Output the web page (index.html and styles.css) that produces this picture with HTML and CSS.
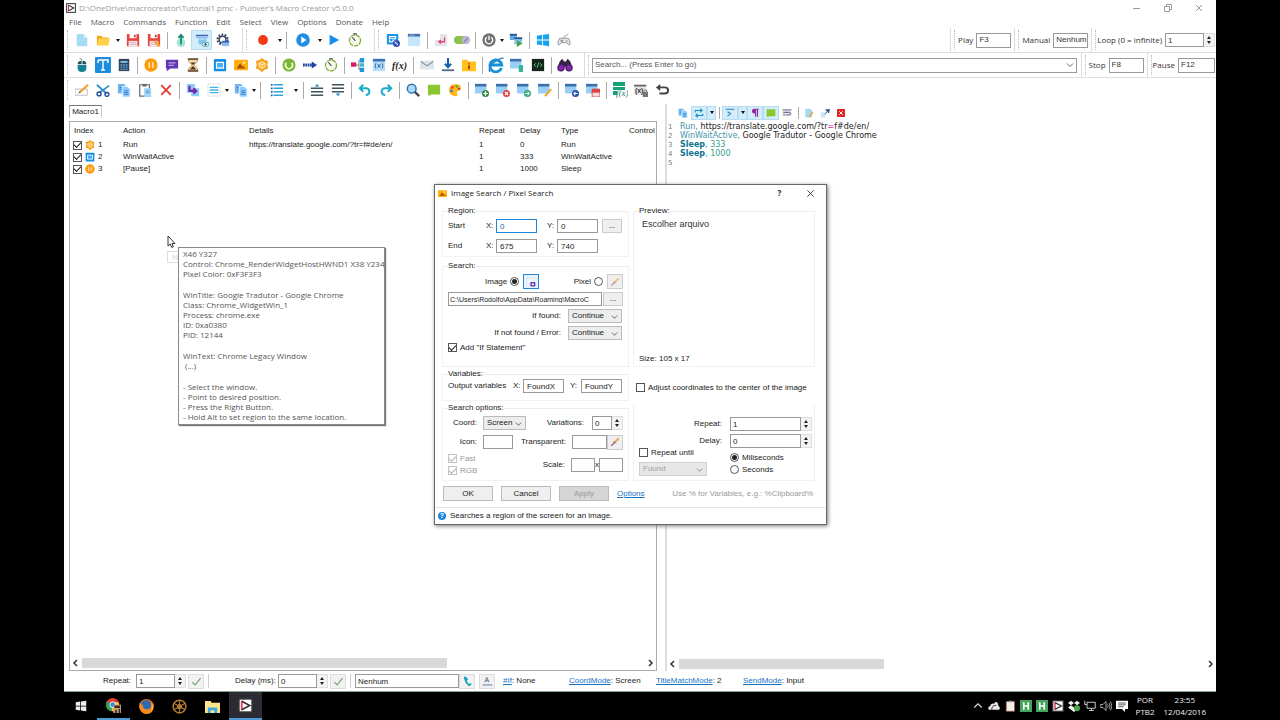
FILE: index.html
```html
<!DOCTYPE html>
<html lang="en">
<head>
<meta charset="utf-8">
<title>Pulover's Macro Creator</title>
<link rel="stylesheet" href="styles.css">
</head>
<body>
<svg class="sprite" aria-hidden="true">
  <symbol id="app" viewBox="0 0 16 16"><rect x="1" y="1" width="14" height="14" fill="#fff" stroke="#333" stroke-width="1.6"/><path d="M4 3v10" stroke="#e0416a" stroke-width="2"/><path d="M4 3.500L12.500 8L4 12.500" fill="none" stroke="#333" stroke-width="1.700"/></symbol>
  <symbol id="new" viewBox="0 0 16 16"><path d="M2 1h8l4 4v10H2z" fill="#a5dbf7"/><path d="M10 1v4h4z" fill="#e3f5ff"/></symbol>
  <symbol id="open" viewBox="0 0 16 16"><path d="M1 3h5l1.500 2H14v9H1z" fill="#f2a81d"/><path d="M3 6h13l-2 8H1z" fill="#ffd04a"/></symbol>
  <symbol id="save" viewBox="0 0 16 16"><path d="M1 1h13l1 1v13H1z" fill="#e8453c"/><path d="M4 1h8v5H4z" fill="#fff"/><path d="M9 2h2v3H9z" fill="#b43"/><path d="M3 9h10v6H3z" fill="#f6eeee"/><path d="M4 11h8M4 13h8" stroke="#c9a" stroke-width=".8"/></symbol>
  <symbol id="saveas" viewBox="0 0 16 16"><use href="#save"/><path d="M9 9l5 6" stroke="#f5a52b" stroke-width="3"/></symbol>
  <symbol id="up" viewBox="0 0 16 16"><ellipse cx="8" cy="11" rx="5" ry="5" fill="#a9e4d3"/><path d="M8 13V3M5 5.500L8 2l3 3.500" fill="none" stroke="#138a72" stroke-width="2"/></symbol>
  <symbol id="preview" viewBox="0 0 16 16"><path d="M1 2h14v3H1z" fill="#3565b5"/><path d="M4 5h9v8H4z" fill="#86c5f1"/><path d="M1 4h14M5 7h6" stroke="#fff" stroke-width=".7"/><ellipse cx="12" cy="13" rx="4" ry="2.500" fill="#e9f7f9" stroke="#48a6a0"/><circle cx="12" cy="13" r="1.300" fill="#236"/></symbol>
  <symbol id="gear" viewBox="0 0 16 16"><circle cx="7.500" cy="7.500" r="5.600" fill="none" stroke="#3b4a66" stroke-width="2.600" stroke-dasharray="2 1.500"/><circle cx="7.500" cy="7.500" r="3.800" fill="#fff" stroke="#3b4a66" stroke-width="1.600"/><path d="M7 9h8v6H7z" fill="#8cbcf0"/><path d="M7 9h8v2H7z" fill="#3565b5"/></symbol>
  <symbol id="rec" viewBox="0 0 16 16"><circle cx="8" cy="8" r="5.600" fill="#f03a12"/></symbol>
  <symbol id="playc" viewBox="0 0 16 16"><circle cx="8" cy="8" r="7.800" fill="#1e8fe8"/><path d="M6 4l6 4-6 4z" fill="#fff"/></symbol>
  <symbol id="play" viewBox="0 0 16 16"><path d="M3 2l11 6-11 6z" fill="#1e8fe8"/></symbol>
  <symbol id="timer" viewBox="0 0 16 16"><circle cx="8" cy="8.500" r="6.300" fill="#f8fbee" stroke="#7cab3a" stroke-width="1.500" stroke-dasharray="5 1"/><path d="M5 5l3.500 4M6 1h4" stroke="#444" stroke-width="1.200"/></symbol>
  <symbol id="winopt" viewBox="0 0 16 16"><rect x="1" y="1" width="13" height="12" rx="1" fill="#1b93e6"/><path d="M4 4h7v2H4zM4 7v3h4V8h3" fill="none" stroke="#fff" stroke-width="1.300"/><circle cx="12" cy="12" r="4" fill="#3b51b5"/><path d="M10 10l3.500 3.500" stroke="#fff" stroke-width="1.200"/></symbol>
  <symbol id="winblank" viewBox="0 0 16 16"><path d="M1 1h14v14H1z" fill="#c5e7fb"/><path d="M1 1h14v3H1z" fill="#466cae"/><path d="M3 2.500h1M5 2.500h1M7 2.500h1" stroke="#fff"/></symbol>
  <symbol id="enter" viewBox="0 0 16 16"><path d="M1 8h6V1h8v14H1z" fill="#e6e4e8"/><path d="M12 5v5H6M8 8l-2.500 2L8 12" fill="none" stroke="#e0457b" stroke-width="1.500"/></symbol>
  <symbol id="toggle" viewBox="0 0 16 16"><rect x="0" y="4" width="15" height="8" rx="4" fill="#8bc34a"/><circle cx="12" cy="8" r="4" fill="#b9b7d8"/><path d="M10 10l4-4" stroke="#6962a8"/></symbol>
  <symbol id="power" viewBox="0 0 16 16"><circle cx="8" cy="8" r="7.600" fill="#717171"/><path d="M5.500 4.800a4.200 4.200 0 1 0 5 0M8 3v5" fill="none" stroke="#fff" stroke-width="1.500"/></symbol>
  <symbol id="multi" viewBox="0 0 16 16"><path d="M1 1h8v7H1z" fill="#62a8e2"/><path d="M1 1h8v2H1z" fill="#285293"/><path d="M6 5h9v8H6z" fill="#8bc4ef"/><path d="M6 5h9v2H6z" fill="#285293"/><path d="M9 8l6 4-6 4z" fill="#43a343"/></symbol>
  <symbol id="winlogo" viewBox="0 0 16 16"><path d="M1 3l6-1v5.500H1zM8 2l7-1v6.500H8zM1 8.500h6V14l-6-1zM8 8.500h7V15l-7-1z" fill="currentColor"/></symbol>
  <symbol id="pad" viewBox="0 0 16 16"><path d="M8 6V4q3-1 5-3" fill="none" stroke="#999"/><path d="M3 6h10q2 2 2 7-1 2-4-2H5q-3 4-4 2 0-5 2-7z" fill="#e6e6e6" stroke="#8d8d8d"/><path d="M4 9h3M5.500 7.500v3M10 9h2" stroke="#777"/></symbol>
  <symbol id="mouse" viewBox="0 0 16 16"><path d="M3 8h10v3q0 5-5 5t-5-5z" fill="#138292"/><path d="M3 7q0-4 4.500-4v4zM8.500 3Q13 3 13 7H8.500z" fill="#284c5c"/><path d="M8 3q0-2-3-3" fill="none" stroke="#3c9d5c"/></symbol>
  <symbol id="text" viewBox="0 0 16 16"><rect width="16" height="16" rx="1" fill="#1d8ede"/><path d="M3 3h10v3M8 3v10M6 13h4M3 6V3" fill="none" stroke="#fff" stroke-width="1.400"/></symbol>
  <symbol id="calc" viewBox="0 0 16 16"><rect x="2" y="1" width="12" height="14" fill="#33455b"/><path d="M4 4.500h8" stroke="#7ecbff" stroke-width="2"/><path d="M4 8h8M4 10.500h8M4 13h8" stroke="#5ba4dd" stroke-width="1.500" stroke-dasharray="2 1"/></symbol>
  <symbol id="pause" viewBox="0 0 16 16"><circle cx="8" cy="8" r="7.600" fill="#ff9a0a"/><path d="M6 4.500v7M10 4.500v7" stroke="#ffe5ae" stroke-width="1.800"/></symbol>
  <symbol id="msg" viewBox="0 0 16 16"><path d="M1 2h14v10H6l-4 3v-3H1z" fill="#6336b1"/><path d="M4 5.500h8M4 8.500h6" stroke="#b9a2e2" stroke-width="1.300"/></symbol>
  <symbol id="hour" viewBox="0 0 16 16"><path d="M3 2h10v2L9 8l4 4v2H3v-2l4-4-4-4z" fill="#f6dfb6" stroke="#c98d3a"/><path d="M5 5h6L8 8zM8 9l4 4H4z" fill="#53321f"/><path d="M2 1.200h12M2 14.800h12" stroke="#543" stroke-width="1.700"/></symbol>
  <symbol id="bwin" viewBox="0 0 16 16"><rect x="1" y="1" width="14" height="14" rx="1" fill="#168ee4"/><path d="M4 5h8v6.500H4z" fill="#46b2fa" stroke="#fff" stroke-width="1.300"/></symbol>
  <symbol id="image" viewBox="0 0 16 16"><rect x="0" y="2" width="16" height="12" rx="1" fill="#ffae10"/><path d="M3 12l4-6 3 4 1-1 2 3z" fill="#a84e00"/><circle cx="11.500" cy="5.500" r="1.400" fill="#fff0b8"/></symbol>
  <symbol id="cube" viewBox="0 0 16 16"><path d="M8 0l3 2.300 4 1-1 4.200 1 4.500-4 1.500L8 16l-3-2.500L1 12l1-4.500-1-4.200 4-1z" fill="#f6a01a"/><path d="M8 4l3.500 2v4L8 12l-3.500-2V6z" fill="#ffb944" stroke="#fff0cd"/><path d="M8 8v4M8 8l3.500-2M8 8L4.500 6" stroke="#fff0cd" stroke-width=".8"/></symbol>
  <symbol id="loop" viewBox="0 0 16 16"><circle cx="8" cy="8" r="7.500" fill="#7cb43b"/><path d="M5 5.500a4 4 0 1 0 6 0" fill="none" stroke="#e4ffb9" stroke-width="2"/></symbol>
  <symbol id="goto" viewBox="0 0 16 16"><path d="M0 8h10" stroke="#1a43a2" stroke-width="3.500" stroke-dasharray="2 .7"/><path d="M10 4l6 4-6 4z" fill="#1a43a2"/></symbol>
  <symbol id="flow" viewBox="0 0 16 16"><path d="M5 8h4M9 3v10M9 3h3M9 13h3" stroke="#777" fill="none"/><path d="M0 5h6v5H0z" fill="#d81b60"/><path d="M10 0h5v5h-5zM10 11h5v5h-5z" fill="#2196d8"/><path d="M10 6h5v4h-5z" fill="#40b8c8"/></symbol>
  <symbol id="var" viewBox="0 0 16 16"><path d="M1 1h14v14H1z" fill="#b7dcfa"/><path d="M1 1h14v3H1z" fill="#3b72b6"/><path d="M4.500 6q-2 3 0 6M11.500 6q2 3 0 6M6.500 7l3 4M9.500 7l-3 4" fill="none" stroke="#2868a8" stroke-width="1.100"/></symbol>
  <symbol id="mail" viewBox="0 0 16 16"><path d="M0 3h16v10H0z" fill="#dce5ec"/><path d="M1 4l7 5 7-5" fill="none" stroke="#82929d" stroke-width="1.300"/></symbol>
  <symbol id="dl" viewBox="0 0 16 16"><path d="M8 0v9M4.500 6.500L8 10.500l3.500-4" fill="none" stroke="#1b5fb0" stroke-width="2.400"/><path d="M1 14h14" stroke="#4a6687" stroke-width="2"/></symbol>
  <symbol id="zip" viewBox="0 0 16 16"><path d="M0 2h6l1 2h9v11H0z" fill="#ffc21a"/><path d="M8 5v8" stroke="#d64a20" stroke-width="2" stroke-dasharray="1.500 .7"/><path d="M7 9h2v3H7z" fill="#9c351d"/></symbol>
  <symbol id="ie" viewBox="0 0 16 16"><path d="M13.500 11a6 6 0 1 1 .3-3H3" fill="none" stroke="#1593d6" stroke-width="2.800"/><path d="M2 15Q-1 10 8 4q6-4 7.500-2.500" fill="none" stroke="#2a7cc7" stroke-width="1.300"/></symbol>
  <symbol id="dev" viewBox="0 0 16 16"><use href="#w"/><rect x="10" y="8" width="5" height="8" rx="1" fill="#37b59a"/></symbol>
  <symbol id="term" viewBox="0 0 16 16"><path d="M1 1h14v14H1z" fill="#15251c"/><path d="M5.500 6l-2 2 2 2M10.500 6l2 2-2 2M9 5l-2 6" fill="none" stroke="#66d77f"/></symbol>
  <symbol id="bino" viewBox="0 0 18 16"><path d="M3 4l3-3 2 3h2l2-3 3 3 2 6H1z" fill="#352443"/><circle cx="4.500" cy="11" r="4.200" fill="#4a256d"/><circle cx="13.500" cy="11" r="4.200" fill="#4a256d"/><circle cx="4.500" cy="11" r="2.600" fill="#8d22b5"/><circle cx="13.500" cy="11" r="2.600" fill="#8d22b5"/></symbol>
  <symbol id="edit" viewBox="0 0 16 16"><path d="M0 7h14v7H0z" fill="#fff" stroke="#b1b8c6"/><path d="M5 11l10-9" stroke="#f5a52b" stroke-width="2.600"/><path d="M4 12l2-2" stroke="#444"/></symbol>
  <symbol id="cut" viewBox="0 0 16 16"><path d="M1 2l11 10M15 3L4 11" stroke="#2b8fd0" stroke-width="2"/><circle cx="3.500" cy="12.500" r="2.200" fill="none" stroke="#24509e" stroke-width="1.700"/><circle cx="12.500" cy="13" r="2.200" fill="none" stroke="#24509e" stroke-width="1.700"/></symbol>
  <symbol id="copy" viewBox="0 0 16 16"><path d="M1 1h7l2 2v9H1z" fill="#72b5ee"/><path d="M6 4h6l3 3v9H6z" fill="#8bcbff" stroke="#fff" stroke-width=".8"/><path d="M8 9h5M8 11h5M8 13h5M3 5h2M3 7h2" stroke="#3878ba"/></symbol>
  <symbol id="paste" viewBox="0 0 16 16"><path d="M2 2h11v13H2z" fill="#fff" stroke="#626d75" stroke-width="1.400"/><path d="M5 1h5v3H5z" fill="#626d75"/><path d="M7 6h8v10H7z" fill="#9ed3fa"/><path d="M9 9h4M9 11h4" stroke="#5592bd"/></symbol>
  <symbol id="del" viewBox="0 0 16 16"><path d="M2.500 2.500l11 11M13.500 2.500l-11 11" stroke="#e5382f" stroke-width="2"/></symbol>
  <symbol id="insert" viewBox="0 0 16 16"><path d="M1 1h9v10H1zM6 6h9v9H6z" fill="#8ecbfa"/><path d="M4 3v6h7M8.500 6l3 3-3 3" fill="none" stroke="#7228a6" stroke-width="2.600"/></symbol>
  <symbol id="sel" viewBox="0 0 16 16"><rect x="1" y="1" width="14" height="14" fill="none" stroke="#aaa" stroke-dasharray="1 2"/><path d="M3 5h10M3 8h10M3 11h10" stroke="#3db4df" stroke-width="1.500"/></symbol>
  <symbol id="list" viewBox="0 0 16 16"><path d="M1 2h2M1 6h2M1 10h2M1 14h2" stroke="#1c62a0" stroke-width="2"/><path d="M4 2h11M4 6h11M4 10h11M4 14h11" stroke="#30a4df" stroke-width="1.600"/></symbol>
  <symbol id="mvup" viewBox="0 0 16 16"><path d="M1 6h14M1 10h14M1 14h14" stroke="#41545c" stroke-width="1.500"/><path d="M8 1l2.500 3h-5z" fill="#1d90b7"/></symbol>
  <symbol id="mvdn" viewBox="0 0 16 16"><path d="M1 2h14M1 6h14M1 10h14" stroke="#41545c" stroke-width="1.500"/><path d="M8 15l2.500-3h-5z" fill="#1d90b7"/></symbol>
  <symbol id="undo" viewBox="0 0 16 16"><path d="M2 6h7q4 0 4 4 0 3-4 4M6 2L2 6l4 4" fill="none" stroke="#1aaecb" stroke-width="2.300"/></symbol>
  <symbol id="redo" viewBox="0 0 16 16"><path d="M14 6H7q-4 0-4 4 0 3 4 4M10 2l4 4-4 4" fill="none" stroke="#1aaecb" stroke-width="2.300"/></symbol>
  <symbol id="find" viewBox="0 0 16 16"><circle cx="6.500" cy="6.500" r="5" fill="#a9dcff" stroke="#3373ae" stroke-width="1.700"/><path d="M10 10l5 5" stroke="#443f50" stroke-width="2.600"/></symbol>
  <symbol id="note" viewBox="0 0 16 16"><path d="M1 2h14v11H5l-3 2v-2H1z" fill="#8bc72e"/></symbol>
  <symbol id="palette" viewBox="0 0 16 16"><path d="M8 1q7 0 7 5 0 3-4 3-2 1 0 4 0 3-3 2Q1 14 1 8q0-6 7-7z" fill="#ffb61c"/><circle cx="5" cy="5" r="1.500" fill="#e54125"/><circle cx="10" cy="4" r="1.500" fill="#4aa947"/><circle cx="4" cy="9" r="1.500" fill="#3478c9"/><circle cx="12.500" cy="6.500" r="1.200" fill="#c62828"/></symbol>
  <symbol id="w" viewBox="0 0 16 16"><path d="M0 1h13v11H0z" fill="#9bcef6"/><path d="M0 1h13v3H0z" fill="#3c70ac"/></symbol>
  <symbol id="wadd" viewBox="0 0 16 16"><use href="#w"/><circle cx="12" cy="12" r="4" fill="#358742"/><path d="M9.500 12h5M12 9.500v5" stroke="#fff" stroke-width="1.400"/></symbol>
  <symbol id="wdel" viewBox="0 0 16 16"><use href="#w"/><circle cx="12" cy="12" r="4" fill="#e23b3b"/><path d="M10.300 10.300l3.400 3.400M13.700 10.300l-3.400 3.400" stroke="#fff" stroke-width="1.300"/></symbol>
  <symbol id="wgo" viewBox="0 0 16 16"><use href="#w"/><circle cx="12" cy="12" r="4" fill="#35a878"/><path d="M9.500 12h4M12 10l2 2-2 2" fill="none" stroke="#fff" stroke-width="1.200"/></symbol>
  <symbol id="wedit" viewBox="0 0 16 16"><use href="#w"/><path d="M8 15l7-8" stroke="#f3a32b" stroke-width="2.500"/></symbol>
  <symbol id="wback" viewBox="0 0 16 16"><use href="#w"/><circle cx="12" cy="12" r="4" fill="#294ba3"/><path d="M14.500 12h-4M12 10l-2 2 2 2" fill="none" stroke="#fff" stroke-width="1.200"/></symbol>
  <symbol id="wcal" viewBox="0 0 16 16"><use href="#w"/><path d="M7 7h9v9H7z" fill="#f4dada" stroke="#d34848"/><path d="M7 7h9v4H7z" fill="#e03f3f"/></symbol>
  <symbol id="refresh" viewBox="0 0 16 16"><path d="M2 7V4h10M10 1l3 3-3 3M14 9v3H4M6 9l-3 3 3 3" fill="none" stroke="#168cc9" stroke-width="1.700"/></symbol>
  <symbol id="back" viewBox="0 0 16 16"><path d="M4 5h7q4 0 4 3.500T11 12H5" fill="none" stroke="#444" stroke-width="2.200"/><path d="M6 1L1 5l5 4z" fill="#444"/></symbol>
  <symbol id="sigma" viewBox="0 0 16 16"><path d="M1 2h14M4 6l5 3-5 4" fill="none" stroke="#2b7fc0" stroke-width="1.800"/></symbol>
  <symbol id="para" viewBox="0 0 16 16"><path d="M9 2v12M12 2v12M14 2H7a3 3 0 0 0 0 6h2" fill="none" stroke="#92249e" stroke-width="1.800"/><path d="M9 2H7a3 3 0 0 0 0 6h2z" fill="#92249e"/></symbol>
  <symbol id="wrap" viewBox="0 0 16 16"><path d="M1 3h14v10H1z" fill="#e1e3ea"/><path d="M1 3h14M2 7h10q2 0 2 2t-3 2H7M2 11h3" fill="none" stroke="#59617a" stroke-width="1.500"/></symbol>
  <symbol id="pin" viewBox="0 0 16 16"><path d="M1 7h8v8H1z" fill="#c6e5fa"/><path d="M8 10l3-4M9 3l5 5 1-6z" fill="#2c5996" stroke="#2c5996" stroke-width="1.400"/></symbol>
  <symbol id="script" viewBox="0 0 16 16"><path d="M2 1h8l3 3v11H2z" fill="#a9d6f4"/><path d="M8 14l6-7" stroke="#e9a33f" stroke-width="2.500"/></symbol>
  <symbol id="close" viewBox="0 0 16 16"><rect width="16" height="16" rx="1" fill="#e02424"/><path d="M4.500 4.500l7 7M11.500 4.500l-7 7" stroke="#fff" stroke-width="2"/></symbol>
  <symbol id="snap" viewBox="0 0 16 16"><path d="M1 1h11v11H1z" fill="#eef6fd" stroke="#b8d4ec" stroke-dasharray="2 1"/><rect x="7" y="8" width="8" height="7" rx="1" fill="#6a3bb5"/><circle cx="11" cy="11.500" r="1.700" fill="#fff"/></symbol>
  <symbol id="pick" viewBox="0 0 16 16"><path d="M2 14l6-6" stroke="#c05a86" stroke-width="2.400"/><path d="M8 8l6-6" stroke="#f2a54a" stroke-width="3"/><path d="M6 7l3 3" stroke="#555" stroke-width="1.500"/></symbol>
  <symbol id="check" viewBox="0 0 16 16"><path d="M2 9l4 4 8-10" fill="none" stroke="#77a777" stroke-width="1.800"/></symbol>
  <symbol id="hook" viewBox="0 0 16 16"><path d="M4 1q0 7 7 13M4 1l4 5M11 14l2-3" fill="none" stroke="#16a4bc" stroke-width="2.600"/></symbol>
  <symbol id="aline" viewBox="0 0 16 16"><path d="M4 9l3-7 3 7M5 7h4" fill="none" stroke="#4f6c90" stroke-width="1.300"/><path d="M1 13h14" stroke="#5a80a8" stroke-width="1.500"/></symbol>
  <symbol id="chrome" viewBox="0 0 18 18"><circle cx="8" cy="8" r="8" fill="#e23c2f"/><path d="M8 8L1 4a8 8 0 0 0 6 12z" fill="#32a350"/><path d="M8 8l-1 8a8 8 0 0 0 8-11H8z" fill="#f9cf38"/><circle cx="8" cy="8" r="3.700" fill="#fff"/><circle cx="8" cy="8" r="2.900" fill="#3e82e8"/><path d="M9 8h9v10H9z" fill="#caa87c"/><path d="M10 9h7v3h-7zM11 14h2v4h-2zM15 13h2v5h-2z" fill="#3a2b24"/></symbol>
  <symbol id="firefox" viewBox="0 0 16 16"><circle cx="8" cy="8" r="8" fill="#e66a12"/><circle cx="7.500" cy="6.500" r="5.500" fill="#2a6bb8"/><path d="M1 3q0 3 3 3 0 5 5 5 4 0 5-6 4 10-6 11Q-1 15 1 3z" fill="#f58a1f"/><path d="M13 3q4 6 0 10 1-5 0-10z" fill="#ffc12e"/></symbol>
  <symbol id="wheel" viewBox="0 0 16 16"><g fill="none" stroke="#b67a32"><circle cx="8" cy="8" r="6.800" stroke-width="1.600"/><circle cx="8" cy="8" r="2" stroke-width="1.500"/><path d="M8 1v14M2 4.500l12 7M14 4.500l-12 7" stroke-width="1.200"/></g></symbol>
  <symbol id="explorer" viewBox="0 0 16 16"><path d="M0 2h6l1 2h9v11H0z" fill="#ffe58a"/><path d="M3 9h10v6h-3v-3H6v3H3z" fill="#3ea9e0"/></symbol>
  <symbol id="cloud" viewBox="0 0 16 16"><path d="M1 13q-2-4 2-5 1-4 5-3 2-4 5-1l1 4q3 2 1 5z" fill="#e9e9e9"/><path d="M5 13q0-6 6-6" fill="none" stroke="#000"/></symbol>
  <symbol id="clip" viewBox="0 0 16 16"><path d="M3 2h11v13H3z" fill="#f5ece5" stroke="#8b5f50"/><path d="M6 1h5v2H6z" fill="#999"/></symbol>
  <symbol id="ahk" viewBox="0 0 16 16"><path d="M0 0h16v16H0z" fill="#45a55c"/><path d="M5 3v10M11 3v10M5 8h6" stroke="#fff" stroke-width="2.200"/></symbol>
  <symbol id="drop" viewBox="0 0 16 16"><path d="M4 1l4 3-4 3-4-3zM12 1l4 3-4 3-4-3zM4 7l4 3-4 3-4-3zM8 10l4 3-4 3-4-3z" fill="#eee"/><circle cx="12" cy="11" r="4" fill="#48a94b"/></symbol>
  <symbol id="net" viewBox="0 0 16 16"><path d="M4 3h11v8H4zM7 14h6M10 11v3M1 1v5h3" fill="none" stroke="#ddd" stroke-width="1.200"/></symbol>
  <symbol id="vol" viewBox="0 0 16 16"><path d="M1 6h3l4-4v12l-4-4H1zM10 6q2 2 0 4M12 4q3 4 0 8M14 2q4 6 0 12" fill="none" stroke="#ddd"/></symbol>
  <symbol id="action" viewBox="0 0 16 16"><path d="M0 1h16v11h-4v4l-4-4H0z" fill="#fff"/><path d="M3 4h10M3 6.500h10M3 9h7" stroke="#222"/></symbol>
</svg>

<div class="window">
  <header class="titlebar">
    <svg class="appicon"><use href="#app"/></svg>
    <h1>D:\OneDrive\macrocreator\Tutorial1.pmc - Pulover's Macro Creator v5.0.0</h1>
    <div class="winbtns">
      <button aria-label="Minimize"><svg viewBox="0 0 10 10"><path d="M1 5.500h7"/></svg></button>
      <button aria-label="Restore"><svg viewBox="0 0 10 10"><path d="M1.500 3.500h5v5h-5zM3.500 3V1.500h5v5H7"/></svg></button>
      <button aria-label="Close"><svg viewBox="0 0 10 10"><path d="M2 2l6 6M8 2L2 8"/></svg></button>
    </div>
  </header>
  <nav class="menu">
    <button>File</button><button>Macro</button><button>Commands</button><button>Function</button><button>Edit</button><button>Select</button><button>View</button><button>Options</button><button>Donate</button><button>Help</button>
  </nav>

  <div class="bar">
    <div class="band file">
      <button class="tb" aria-label="New"><svg><use href="#new"/></svg></button>
      <button class="tb" aria-label="Open"><svg><use href="#open"/></svg></button>
      <button class="caret" aria-label="Recent files"></button>
      <button class="tb" aria-label="Save"><svg><use href="#save"/></svg></button>
      <button class="tb" aria-label="Save as"><svg><use href="#saveas"/></svg></button>
      <i class="sep"></i>
      <button class="tb" aria-label="Export"><svg><use href="#up"/></svg></button>
      <button class="tb on" aria-label="Preview"><svg><use href="#preview"/></svg></button>
      <button class="tb" aria-label="Settings"><svg><use href="#gear"/></svg></button>
    </div>
    <div class="band run">
      <button class="tb wide" aria-label="Record"><svg><use href="#rec"/></svg></button>
      <button class="caret slim" aria-label="Record options"></button>
      <i class="sep"></i>
      <button class="tb wide" aria-label="Play"><svg><use href="#playc"/></svg></button>
      <button class="caret slim" aria-label="Play options"></button>
      <button class="tb" aria-label="Play step"><svg><use href="#play"/></svg></button>
      <button class="tb" aria-label="Timer"><svg><use href="#timer"/></svg></button>
    </div>
    <div class="band grow">
      <button class="tb" aria-label="Controls"><svg><use href="#winopt"/></svg></button>
      <button class="tb" aria-label="Window"><svg><use href="#winblank"/></svg></button>
      <i class="sep"></i>
      <button class="tb" aria-label="Manual key"><svg><use href="#enter"/></svg></button>
      <button class="tb" aria-label="Toggle"><svg class="big"><use href="#toggle"/></svg></button>
      <i class="sep"></i>
      <button class="tb" aria-label="Power"><svg><use href="#power"/></svg></button>
      <button class="caret slim" aria-label="Power options"></button>
      <button class="tb" aria-label="Run windows"><svg><use href="#multi"/></svg></button>
      <i class="sep"></i>
      <button class="tb blue" aria-label="Windows key"><svg><use href="#winlogo"/></svg></button>
      <button class="tb" aria-label="Joystick"><svg><use href="#pad"/></svg></button>
    </div>
    <div class="band keys"><label for="kplay">Play</label><input id="kplay" class="key" value="F3"></div>
    <div class="band keys"><label for="kman">Manual</label><input id="kman" class="key" value="Nenhum"></div>
    <div class="band keys last"><label for="kloop">Loop (0 = infinite)</label><span class="spin loop"><input id="kloop" value="1"><i></i></span></div>
  </div>

  <div class="bar">
    <div class="band cmd">
      <button class="tb" aria-label="Mouse"><svg><use href="#mouse"/></svg></button>
      <button class="tb" aria-label="Text"><svg class="big"><use href="#text"/></svg></button>
      <button class="tb" aria-label="Keys"><svg><use href="#calc"/></svg></button>
      <i class="sep"></i>
      <button class="tb" aria-label="Pause"><svg><use href="#pause"/></svg></button>
      <button class="tb" aria-label="Message"><svg><use href="#msg"/></svg></button>
      <button class="tb" aria-label="Wait"><svg><use href="#hour"/></svg></button>
      <i class="sep"></i>
      <button class="tb" aria-label="Window"><svg><use href="#bwin"/></svg></button>
      <button class="tb" aria-label="Image search"><svg><use href="#image"/></svg></button>
      <button class="tb" aria-label="Run"><svg><use href="#cube"/></svg></button>
      <i class="sep"></i>
      <button class="tb" aria-label="Loop"><svg><use href="#loop"/></svg></button>
      <button class="tb" aria-label="Go to"><svg><use href="#goto"/></svg></button>
      <button class="tb" aria-label="Timer"><svg><use href="#timer"/></svg></button>
      <i class="sep"></i>
      <button class="tb" aria-label="If"><svg><use href="#flow"/></svg></button>
      <button class="tb" aria-label="Variable"><svg><use href="#var"/></svg></button>
      <button class="tb fx">f(x)</button>
      <i class="sep"></i>
      <button class="tb" aria-label="Email"><svg><use href="#mail"/></svg></button>
      <button class="tb" aria-label="Download"><svg><use href="#dl"/></svg></button>
      <button class="tb" aria-label="Zip"><svg><use href="#zip"/></svg></button>
      <i class="sep"></i>
      <button class="tb" aria-label="Internet Explorer"><svg class="big"><use href="#ie"/></svg></button>
      <button class="tb" aria-label="Expression"><svg><use href="#dev"/></svg></button>
      <button class="tb" aria-label="Script"><svg><use href="#term"/></svg></button>
      <i class="sep"></i>
      <button class="tb" aria-label="Find command"><svg class="big"><use href="#bino"/></svg></button>
    </div>
    <div class="band grow search"><span class="combo"><input aria-label="Search" placeholder="Search... (Press Enter to go)"><svg viewBox="0 0 8 8"><path d="M1 2.500l3 3 3-3"/></svg></span></div>
    <div class="band keys"><label for="kstop">Stop</label><input id="kstop" class="key" value="F8"></div>
    <div class="band keys last"><label for="kpause">Pause</label><input id="kpause" class="key wider" value="F12"></div>
  </div>

  <div class="bar plain">
    <div class="band">
      <button class="tb" aria-label="Edit"><svg><use href="#edit"/></svg></button>
      <button class="tb" aria-label="Cut"><svg><use href="#cut"/></svg></button>
      <button class="tb" aria-label="Copy"><svg><use href="#copy"/></svg></button>
      <button class="tb" aria-label="Paste"><svg><use href="#paste"/></svg></button>
      <button class="tb" aria-label="Delete"><svg><use href="#del"/></svg></button>
      <i class="sep"></i>
      <button class="tb" aria-label="Insert"><svg><use href="#insert"/></svg></button>
      <button class="tb" aria-label="Select"><svg><use href="#sel"/></svg></button>
      <button class="caret slim" aria-label="Select options"></button>
      <button class="tb" aria-label="Duplicate"><svg><use href="#copy"/></svg></button>
      <button class="caret slim" aria-label="Duplicate options"></button>
      <i class="sep"></i>
      <button class="tb wide" aria-label="List"><svg><use href="#list"/></svg></button>
      <button class="caret" aria-label="List options"></button>
      <i class="sep"></i>
      <button class="tb" aria-label="Move up"><svg><use href="#mvup"/></svg></button>
      <button class="tb" aria-label="Move down"><svg><use href="#mvdn"/></svg></button>
      <i class="sep"></i>
      <button class="tb" aria-label="Undo"><svg><use href="#undo"/></svg></button>
      <button class="tb" aria-label="Redo"><svg><use href="#redo"/></svg></button>
      <i class="sep"></i>
      <button class="tb" aria-label="Find"><svg><use href="#find"/></svg></button>
      <button class="tb" aria-label="Comment"><svg><use href="#note"/></svg></button>
      <button class="tb" aria-label="Color"><svg><use href="#palette"/></svg></button>
      <i class="sep"></i>
      <button class="tb" aria-label="Add tab"><svg><use href="#wadd"/></svg></button>
      <button class="tb" aria-label="Close tab"><svg><use href="#wdel"/></svg></button>
      <button class="tb" aria-label="Duplicate tab"><svg><use href="#wgo"/></svg></button>
      <button class="tb" aria-label="Edit tab"><svg><use href="#wedit"/></svg></button>
      <i class="sep"></i>
      <button class="tb" aria-label="Import"><svg><use href="#wback"/></svg></button>
      <button class="tb" aria-label="Save tab"><svg><use href="#wcal"/></svg></button>
      <i class="sep"></i>
      <button class="tb" aria-label="User function"><svg class="big" viewBox="0 0 16 16"><path d="M1 0h12v4H1zM1 5h12v3H1zM1 9h4v4H1z" fill="#18a278"/><text x="4" y="14" class="gfx">f(x)</text></svg></button>
      <button class="tb" aria-label="Parameter"><svg viewBox="0 0 16 16"><path d="M0 2h14v11H0z" fill="#e7e7e7"/><path d="M0 2h14v2H0z" fill="#666"/><text x="1" y="11" class="xl">(x)</text><path d="M10 10h6v6h-6z" fill="#777"/><path d="M11.500 10V8h3v2" fill="none" stroke="#777"/></svg></button>
      <button class="tb" aria-label="Return"><svg><use href="#back"/></svg></button>
    </div>
  </div>

  <main class="panes">
    <section class="left">
      <div class="tabs"><button>Macro1</button></div>
      <div class="list">
        <table>
          <colgroup><col class="c1"><col class="c2"><col class="c3"><col class="c4"><col class="c5"><col class="c6"><col></colgroup>
          <thead><tr><th>Index</th><th>Action</th><th>Details</th><th>Repeat</th><th>Delay</th><th>Type</th><th>Control</th></tr></thead>
          <tbody>
            <tr><td><label><input type="checkbox" checked><svg><use href="#cube"/></svg>1</label></td><td>Run</td><td>https://translate.google.com/?tr=f#de/en/</td><td>1</td><td>0</td><td>Run</td><td></td></tr>
            <tr><td><label><input type="checkbox" checked><svg><use href="#bwin"/></svg>2</label></td><td>WinWaitActive</td><td></td><td>1</td><td>333</td><td>WinWaitActive</td><td></td></tr>
            <tr><td><label><input type="checkbox" checked><svg><use href="#pause"/></svg>3</label></td><td>[Pause]</td><td></td><td>1</td><td>1000</td><td>Sleep</td><td></td></tr>
          </tbody>
        </table>
        <div class="hscroll"><svg viewBox="0 0 8 8"><path d="M5 1L2 4l3 3"/></svg><div class="track"><div class="thumb"></div></div><svg viewBox="0 0 8 8"><path d="M3 1l3 3-3 3"/></svg></div>
      </div>
    </section>
    <section class="right">
      <div class="ctools">
        <button class="ct" aria-label="Copy"><svg><use href="#copy"/></svg></button>
        <button class="ct on" aria-label="Refresh"><svg><use href="#refresh"/></svg></button>
        <button class="caret on" aria-label="Refresh options"></button>
        <i class="sep"></i>
        <button class="ct on" aria-label="Indent"><svg><use href="#sigma"/></svg></button>
        <button class="caret on" aria-label="Indent options"></button>
        <button class="ct on" aria-label="Whitespace"><svg><use href="#para"/></svg></button>
        <button class="ct on" aria-label="Comments"><svg><use href="#note"/></svg></button>
        <button class="ct" aria-label="Wrap"><svg><use href="#wrap"/></svg></button>
        <i class="sep"></i>
        <button class="ct" aria-label="Edit script"><svg><use href="#script"/></svg></button>
        <button class="ct" aria-label="Pin"><svg><use href="#pin"/></svg></button>
        <button class="ct" aria-label="Close"><svg class="small"><use href="#close"/></svg></button>
      </div>
      <ol class="code">
        <li><span class="cmdt">Run,</span> https://translate.google.com/?tr<span class="eq">=</span>f#de/en/</li>
        <li><span class="cmdt">WinWaitActive,</span> Google Tradutor - Google Chrome</li>
        <li><b>Sleep</b><span class="cmdt">,</span> <span class="num">333</span></li>
        <li><b>Sleep</b><span class="cmdt">,</span> <span class="num">1000</span></li>
        <li></li>
      </ol>
      <div class="hscroll"><svg viewBox="0 0 8 8"><path d="M5 1L2 4l3 3"/></svg><div class="track"><div class="thumb short"></div></div><svg viewBox="0 0 8 8"><path d="M3 1l3 3-3 3"/></svg></div>
    </section>
  </main>

  <footer class="status">
    <div class="sgrp first"><label for="srep">Repeat:</label><span class="spin s50"><input id="srep" value="1"><i></i></span><button class="sb" aria-label="Apply repeat"><svg><use href="#check"/></svg></button></div>
    <div class="sgrp second"><label for="sdel">Delay (ms):</label><span class="spin s50"><input id="sdel" value="0"><i></i></span><button class="sb" aria-label="Apply delay"><svg><use href="#check"/></svg></button></div>
    <div class="sgrp third"><input class="hot" aria-label="Hotkey" value="Nenhum"><button class="sb" aria-label="Insert hotkey"><svg><use href="#hook"/></svg></button><button class="sb gap" aria-label="Text format"><svg><use href="#aline"/></svg></button></div>
    <p class="m1"><a href="#if">#If</a>: None</p><p class="m2"><a href="#coord">CoordMode</a>: Screen</p><p class="m2"><a href="#tmm">TitleMatchMode</a>: 2</p><p class="m2"><a href="#send">SendMode</a>: Input</p>
  </footer>

  <div class="ghost" aria-hidden="true">N</div>
  <div class="tip">
    <p>X46 Y327<br>Control: Chrome_RenderWidgetHostHWND1 X38 Y234<br>Pixel Color: 0xF3F3F3</p>
    <p>WinTitle: Google Tradutor - Google Chrome<br>Class: Chrome_WidgetWin_1<br>Process: chrome.exe<br>ID: 0xa0380<br>PID: 12144</p>
    <p>WinText: Chrome Legacy Window<br>&nbsp;(...)</p>
    <p>- Select the window.<br>- Point to desired position.<br>- Press the Right Button.<br>- Hold Alt to set region to the same location.</p>
  </div>
  <svg class="cursor" viewBox="0 0 9 14"><path d="M1 1v10l2.300-2 1.500 3.500 1.500-.7L5 8.500h3z"/></svg>

  <form class="dialog">
    <div class="dtitle"><svg><use href="#image"/></svg><h2>Image Search / Pixel Search</h2><button type="button" aria-label="Help">?</button><button type="button" aria-label="Close"><svg viewBox="0 0 10 10"><path d="M1.500 1.500l7 7M8.500 1.500l-7 7"/></svg></button></div>
    <div class="dbody">
      <div class="stack">
        <fieldset class="region"><legend>Region:</legend>
          <div class="reg"><span>Start</span><label for="x1">X:</label><input id="x1" class="focus" value="0"><label for="y1">Y:</label><input id="y1" value="0"><button type="button" class="dots">...</button></div>
          <div class="reg"><span>End</span><label for="x2">X:</label><input id="x2" value="675"><label for="y2">Y:</label><input id="y2" value="740"></div>
        </fieldset>
        <fieldset class="srch"><legend>Search:</legend>
          <div class="mode"><label>Image<input type="radio" name="mode" checked></label><button type="button" class="ib sel" aria-label="Screenshot"><svg><use href="#snap"/></svg></button><label class="px">Pixel<input type="radio" name="mode"></label><button type="button" class="ib dim" aria-label="Pick color"><svg><use href="#pick"/></svg></button></div>
          <div class="path"><input aria-label="Image path" value="C:\Users\Rodolfo\AppData\Roaming\MacroC"><button type="button" class="dots">...</button></div>
          <div class="cond"><label for="f1">If found:</label><select id="f1"><option>Continue</option></select></div>
          <div class="cond"><label for="f2">If not found / Error:</label><select id="f2"><option>Continue</option></select></div>
          <label class="ck"><input type="checkbox" checked>Add "If Statement"</label>
        </fieldset>
      </div>
      <fieldset class="prev"><legend>Preview:</legend><strong>Escolher arquivo</strong><span>Size: 105 x 17</span></fieldset>
      <fieldset class="vars"><legend>Variables:</legend>
        <div class="out"><span>Output variables</span><label for="fx">X:</label><input id="fx" value="FoundX"><label for="fy">Y:</label><input id="fy" value="FoundY"></div>
      </fieldset>
      <div class="adj"><label class="ck"><input type="checkbox">Adjust coordinates to the center of the image</label></div>
      <fieldset class="opts"><legend>Search options:</legend>
        <div class="orow"><label class="l1" for="co">Coord:</label><select id="co"><option>Screen</option></select><label class="l2" for="va">Variations:</label><span class="spin s31"><input id="va" value="0"><i></i></span></div>
        <div class="orow"><label class="l1" for="ic">Icon:</label><input id="ic" class="w30"><label class="l2 tr" for="tp">Transparent:</label><input id="tp" class="w34"><button type="button" class="ib" aria-label="Pick transparent color"><svg><use href="#pick"/></svg></button></div>
        <div class="orow low"><div class="dis"><label class="ck"><input type="checkbox" checked disabled>Fast</label><label class="ck"><input type="checkbox" checked disabled>RGB</label></div><label class="l2 tr" for="sw">Scale:</label><input id="sw" class="w24"><span class="by">x</span><input aria-label="Scale height" class="w24"></div>
      </fieldset>
      <fieldset class="rep">
        <div class="rrow"><label for="rr">Repeat:</label><span class="spin s82"><input id="rr" value="1"><i></i></span></div>
        <div class="rrow"><label for="rd">Delay:</label><span class="spin s82"><input id="rd" value="0"><i></i></span></div>
        <div class="until"><div><label class="ck"><input type="checkbox">Repeat until</label><select aria-label="Until" disabled><option>Found</option></select></div><div class="unit"><label class="ck"><input type="radio" name="u" checked>Miliseconds</label><label class="ck"><input type="radio" name="u">Seconds</label></div></div>
      </fieldset>
    </div>
    <div class="dfoot"><button type="button">OK</button><button type="button">Cancel</button><button type="button" disabled>Apply</button><a href="#options">Options</a><span>Use % for Variables, e.g.: %Clipboard%</span></div>
    <div class="dstat"><i>?</i>Searches a region of the screen for an image.</div>
  </form>
</div>

<footer class="taskbar">
  <button class="ti start" aria-label="Start"><svg><use href="#winlogo"/></svg></button>
  <button class="ti open" aria-label="Chrome"><svg><use href="#chrome"/></svg></button>
  <button class="ti" aria-label="Firefox"><svg><use href="#firefox"/></svg></button>
  <button class="ti" aria-label="Wheel"><svg><use href="#wheel"/></svg></button>
  <button class="ti" aria-label="File Explorer"><svg><use href="#explorer"/></svg></button>
  <button class="ti open active" aria-label="Macro Creator"><svg><use href="#app"/></svg></button>
  <div class="tray">
    <svg viewBox="0 0 16 16"><path d="M3 10l5-5 5 5" fill="none" stroke="#ddd" stroke-width="1.500"/></svg>
    <svg><use href="#cloud"/></svg><svg><use href="#clip"/></svg><svg><use href="#ahk"/></svg><svg><use href="#ahk"/></svg><svg><use href="#app"/></svg><svg><use href="#drop"/></svg><svg><use href="#net"/></svg><svg><use href="#vol"/></svg><svg><use href="#action"/></svg>
  </div>
  <p class="lang">POR<br>PTB2</p>
  <p class="clock">23:55<br>12/04/2016</p>
</footer>
</body>
</html>
```

FILE: styles.css
```css
* { box-sizing: border-box; }
:root {
  --ui: "Open Sans", "Noto Sans", sans-serif;
  --classic: "Liberation Sans", Arial, sans-serif;
}
body {
  margin: 0;
  padding: 0 5%;
  min-height: 100vh;
  display: flex;
  flex-direction: column;
  background: #000;
  font: 8px/10px var(--ui);
  color: #333;
}
button, input, select { font: inherit; color: inherit; margin: 0; padding: 0; border: 0; background: none; border-radius: 0; }
h1, h2, p, ol, fieldset { margin: 0; padding: 0; font: inherit; }
svg { display: block; width: 14px; height: 14px; flex: none; }
a { color: #1673c4; }
.sprite { display: none; }
.fx { font: italic bold 10px "Liberation Serif", serif; color: #222; }
.gfx { font: italic 9px "Liberation Serif", serif; fill: #187a68; }
.xl { font: bold 8px "Liberation Sans", sans-serif; fill: #333; }

.window { position: relative; flex: 1; display: flex; flex-direction: column; background: #fff; }
.titlebar { display: flex; align-items: center; height: 16px; padding-left: 2px; color: #999; }
.appicon { width: 10px; height: 10px; margin-right: 3px; }
.winbtns { margin-left: auto; display: flex; padding-right: 2px; }
.winbtns button { width: 31px; display: flex; justify-content: center; }
.winbtns svg { width: 10px; height: 10px; fill: none; stroke: #999; }
.menu { display: flex; height: 12px; padding-left: 5px; gap: 9px; align-items: center; color: #555; }

.bar { display: flex; height: 25px; border-bottom: 1px solid #ddd; }
.bar.plain { border: 0; height: 26px; padding-bottom: 2px; }
.band { display: flex; align-items: center; padding-left: 7px; border-right: 1px solid #ddd; position: relative; }
.band::before { content: ""; position: absolute; left: 3px; top: 2px; bottom: 2px; border-left: 1px dotted #bbb; }
.bar.plain .band, .band.last { border-right: 0; }
.file { width: 179px; }
.run { width: 132px; padding-left: 6px; }
.cmd { width: 521px; }
.grow { flex: 1; }
.tb { width: 21px; height: 20px; display: flex; align-items: center; justify-content: center; }
.tb.wide { width: 28px; }
.tb.blue { color: #18a4e8; }
.big { width: 16px; height: 16px; }
.on { background: #d3ecfa; box-shadow: inset 0 0 0 1px #b5dcf3; }
.caret { width: 9px; height: 20px; display: flex; align-items: center; justify-content: center; flex: none; }
.caret::before { content: ""; border: 2px solid transparent; border-top: 3px solid #111; border-bottom: 0; }
.caret.slim { width: 6px; }
.sep { width: 6px; height: 17px; flex: none; display: flex; justify-content: center; }
.sep::before { content: ""; width: 1px; background: #aaa; }
.keys { gap: 3px; padding-right: 3px; color: #333; }
.keys.last { padding-left: 5px; padding-right: 1px; }
.key { width: 35px; height: 15px; border: 1px solid #999; padding: 0 0 1px 2px; }
.key, .combo, .loop { font: 8px/10px var(--classic); }
.key.wider { width: 37px; }
.search { padding-right: 4px; }
.combo { flex: 1; height: 15px; border: 1px solid #999; display: flex; align-items: center; padding: 0 2px; }
.combo input { flex: 1; min-width: 0; outline: 0; }
.combo input::placeholder { color: #555; opacity: 1; }
.combo svg { width: 8px; height: 8px; fill: none; stroke: #666; }
.spin { display: flex; height: 14px; }
.spin input { flex: 1; min-width: 0; height: 14px; border: 1px solid #999; padding-left: 2px; }
.spin i { width: 11px; display: flex; flex-direction: column; justify-content: center; align-items: center; gap: 2px; background: #f3f3f3; border: 1px solid #ddd; border-left: 0; }
.spin i::before, .spin i::after { content: ""; border: 2px solid transparent; }
.spin i::before { border-bottom: 3px solid #222; border-top: 0; }
.spin i::after { border-top: 3px solid #222; border-bottom: 0; }
.loop { width: 50px; }
.s50 { width: 50px; }
.s31 { width: 31px; }
.s82 { width: 82px; }

.panes { flex: 1; display: grid; grid-template-columns: 601fr 551fr; font: 8px/10px var(--classic); color: #222; }
.left { padding: 1px 8px 0 5px; display: flex; flex-direction: column; }
.tabs { height: 16px; }
.tabs button { width: 33px; height: 13px; border: 1px solid #aaa; border-color: #777 #ccc #fff #aaa; }
.list { flex: 1; border: 1px solid #aaa; display: flex; flex-direction: column; justify-content: space-between; }
table { width: 100%; table-layout: fixed; border-collapse: collapse; }
th, td { font-weight: 400; text-align: left; padding: 0; height: 12px; white-space: nowrap; }
th { height: 17px; }
th:first-child { padding-left: 4px; }
.c1 { width: 53px; } .c2 { width: 126px; } .c3 { width: 230px; } .c4 { width: 41px; } .c5 { width: 41px; } .c6 { width: 68px; }
td label { display: flex; align-items: center; gap: 3px; padding-left: 3px; }
td svg { width: 10px; height: 10px; }
input[type=checkbox] { appearance: none; width: 9px; height: 9px; border: 1px solid #555; display: grid; place-items: center; flex: none; }
input[type=checkbox]:checked::before { content: ""; width: 6px; height: 3px; border: solid #222; border-width: 0 0 1px 1px; transform: translateY(-1px) rotate(-45deg); }
input[type=radio] { appearance: none; width: 9px; height: 9px; border: 1px solid #555; border-radius: 50%; display: grid; place-items: center; flex: none; }
input[type=radio]:checked::before { content: ""; width: 5px; height: 5px; border-radius: 50%; background: #222; }
input:disabled { opacity: .35; }
.hscroll { display: flex; align-items: center; height: 14px; padding: 0 2px; gap: 2px; }
.hscroll svg { width: 8px; height: 8px; fill: none; stroke: #333; stroke-width: 1.500; }
.track { flex: 1; }
.thumb { width: 65%; height: 10px; background: #d9d9d9; }
.thumb.short { width: 39%; }
.right { border-left: 2px solid #ddd; display: flex; flex-direction: column; }
.ctools { display: flex; align-items: center; height: 17px; padding-left: 8px; }
.ct { width: 16px; height: 14px; display: grid; place-items: center; }
.ct svg { width: 10px; height: 10px; }
.ct .small { width: 8px; height: 8px; }
.ctools .caret { width: 9px; height: 14px; }
.ctools .sep { height: 12px; }
.code { list-style: none; counter-reset: n; flex: 1; padding-top: 1px; font: 8px/9px "DejaVu Sans", sans-serif; color: #222; }
.code li { counter-increment: n; height: 9px; white-space: nowrap; }
.code li::before { content: counter(n); display: inline-block; width: 12px; padding-left: 1px; font-size: 7px; color: #777; }
.cmdt { color: #3f93a8; }
.code b { color: #0e7691; }
.eq { color: #e0208a; }
.num { color: #35a28e; }

.status { display: flex; align-items: center; height: 21px; border-bottom: 1px solid #8aa08a; font: 8px/10px var(--classic); color: #222; }
.sgrp { display: flex; align-items: center; height: 14px; border-right: 1px solid #ccc; }
.sgrp.first { width: 145px; padding-left: 39px; }
.sgrp.first label { width: 33px; }
.sgrp.second { width: 142px; padding-left: 26px; }
.sgrp.second label { width: 43px; white-space: nowrap; }
.sgrp.third { padding-left: 4px; border: 0; }
.sb { width: 16px; height: 15px; margin-left: 2px; background: #f2f2f2; border: 1px solid #ddd; display: grid; place-items: center; }
.sb svg { width: 11px; height: 11px; }
.hot { width: 104px; height: 14px; border: 1px solid #999; padding-left: 2px; }
.hot + .sb { margin-left: 0; }
.sb.gap { margin-left: 4px; }
.m1 { width: 74px; padding-left: 8px; }
.m2 { width: 87px; white-space: nowrap; }

.ghost { position: absolute; left: 103px; top: 251px; width: 16px; height: 12px; padding-left: 4px; border: 1px solid #ddd; color: #ccc; }
.tip { position: absolute; left: 114px; top: 247px; height: 178px; padding: 1px 0 0 4px; background: #fff; border: 1px solid #888; box-shadow: 1px 1px 1px #777; color: #555; display: flex; flex-direction: column; gap: 11px; white-space: nowrap; }
.cursor { position: absolute; left: 103px; top: 235px; width: 9px; height: 14px; fill: #fff; stroke: #333; }

.dialog { position: absolute; left: 370px; top: 184px; width: 393px; background: #fff; border: 1px solid #666; box-shadow: 1px 1px 4px #777; font: 8px/10px var(--classic); color: #222; white-space: nowrap; }
.dtitle { display: flex; align-items: center; height: 16px; padding-left: 3px; font: 8px/10px var(--ui); color: #222; }
.dtitle > svg { width: 9px; height: 9px; margin-right: 4px; }
.dtitle h2 { flex: 1; }
.dtitle button { width: 31px; display: flex; justify-content: center; font-weight: 700; }
.dtitle button svg { width: 9px; height: 9px; fill: none; stroke: #333; }
.dbody { display: grid; grid-template-columns: 187px minmax(0, 1fr); grid-template-rows: 161px 32px 78px; gap: 2px 4px; padding: 5px 11px 0 7px; }
.stack { display: flex; flex-direction: column; gap: 4px; }
fieldset { min-width: 0; border: 1px solid #f1f1f1; border-top-color: #eee; padding: 3px 5px; }
legend { padding: 0; height: 10px; }
.region { padding-top: 3px; }
.dialog input:not([type]), .dialog select { height: 14px; min-width: 0; border: 1px solid #999; padding-left: 3px; }
.dialog .path input:not([type]) { padding-left: 1px; font-size: 7px; }
.dialog .spin input:not([type]) { padding-left: 2px; }
.dialog select { appearance: none; background: #ededed url("data:image/svg+xml,%3Csvg xmlns='http://www.w3.org/2000/svg' viewBox='0 0 8 8'%3E%3Cpath d='M1 3l3 3 3-3' fill='none' stroke='%23555'/%3E%3C/svg%3E") no-repeat right 3px center / 7px 7px; border-color: #bbb; }
.dialog input.focus { border-color: #1e86d8; color: #1e5fa8; }
.reg { display: grid; grid-template-columns: 38px 10px 41px 10px 10px 41px 4px 20px; align-items: center; height: 14px; margin-bottom: 6px; }
.reg label:nth-of-type(2) { grid-column: 5; }
.reg .dots { grid-column: 8; }
.reg:last-child { margin-bottom: 0; }
.dots, .ib { background: #efefef; border: 1px solid #ccc; height: 14px; width: 20px; line-height: 10px; }
.ib { width: 16px; height: 15px; display: grid; place-items: center; flex: none; }
.ib svg { width: 10px; height: 10px; }
.ib.sel { border: 1px solid #1e86d8; background: #e8f3fc; }
.ib.dim svg { opacity: .6; }
.srch { flex: 1; padding-top: 3px; }
.srch > div { display: flex; align-items: center; margin-bottom: 3px; }
.mode { padding-left: 37px; }
.mode label { display: flex; gap: 3px; align-items: center; margin-right: 4px; }
.mode .px { margin-left: auto; }
.path { gap: 1px; }
.path input { flex: 1; }
.srch .cond { justify-content: flex-end; gap: 7px; padding-right: 1px; }
.cond select { width: 54px; }
.ck { display: flex; align-items: center; gap: 3px; height: 9px; white-space: nowrap; }
.prev { display: flex; flex-direction: column; justify-content: space-between; padding: 2px 5px 2px; }
.prev strong { font: 9px/12px "Liberation Sans", Arial, sans-serif; padding-left: 3px; color: #333; }
.vars { padding-top: 0; }
.out { display: grid; grid-template-columns: 65px 10px 41px 17px 41px; align-items: center; }
.out label:last-of-type { justify-self: end; margin-right: 4px; }
.adj { padding: 14px 0 0 3px; }
.orow { display: flex; align-items: center; height: 14px; margin-bottom: 5px; }
.orow .l1 { width: 29px; text-align: right; margin-right: 6px; }
.orow .l2 { flex: 1; text-align: right; margin-right: 8px; }
.orow .tr { margin-right: 6px; }
.orow select { width: 43px; }
.dialog .w30 { width: 30px; }
.dialog .w34 { width: 35px; }
.dialog .w24 { width: 24px; }
.by { width: 4px; text-align: center; }
.orow.low { height: 21px; margin: 0; }
.dis { color: #999; display: flex; flex-direction: column; gap: 3px; }
.rep { padding: 13px 2px 0 5px; border-top-color: transparent; }
.rrow { display: flex; align-items: center; justify-content: flex-end; gap: 8px; margin-bottom: 3px; }
.rrow + .rrow { margin-bottom: 0; }
.until { display: flex; justify-content: space-between; }
.until > div { display: flex; flex-direction: column; gap: 5px; }
.until .unit { width: 82px; gap: 3px; padding-top: 5px; }
.until select { width: 68px; color: #777; background-color: #ddd; }
.dfoot { display: flex; align-items: center; padding: 5px 13px 6px 8px; height: 26px; }
.dfoot button { width: 50px; height: 15px; background: #efefef; border: 1px solid #bbb; margin-right: 8px; }
.dfoot button:disabled { background: #d6d6d6; color: #999; }
.dfoot span { margin-left: auto; color: #999; }
.dstat { display: flex; align-items: center; gap: 4px; height: 17px; padding-left: 3px; border-top: 1px solid #e6e6e6; }
.dstat i { width: 8px; height: 8px; border-radius: 50%; background: #1e86d8; color: #fff; font: bold 7px/8px "Liberation Sans", sans-serif; text-align: center; }

.taskbar { display: flex; height: 28px; color: #eee; }
.ti { width: 33px; display: grid; place-items: center; }
.ti svg { width: 15px; height: 15px; }
.ti.start svg { width: 12px; height: 12px; }
.ti.open { border-bottom: 2px solid #4c9ad6; }
.ti.active { background: #2b2b33; }
.tray { margin-left: auto; display: flex; align-items: center; gap: 4px; }
.tray svg { width: 12px; height: 12px; }
.lang, .clock { text-align: center; line-height: 12px; padding-top: 2px; }
.lang { margin: 0 9px 0 8px; }
.clock { margin-right: 10px; }
```
